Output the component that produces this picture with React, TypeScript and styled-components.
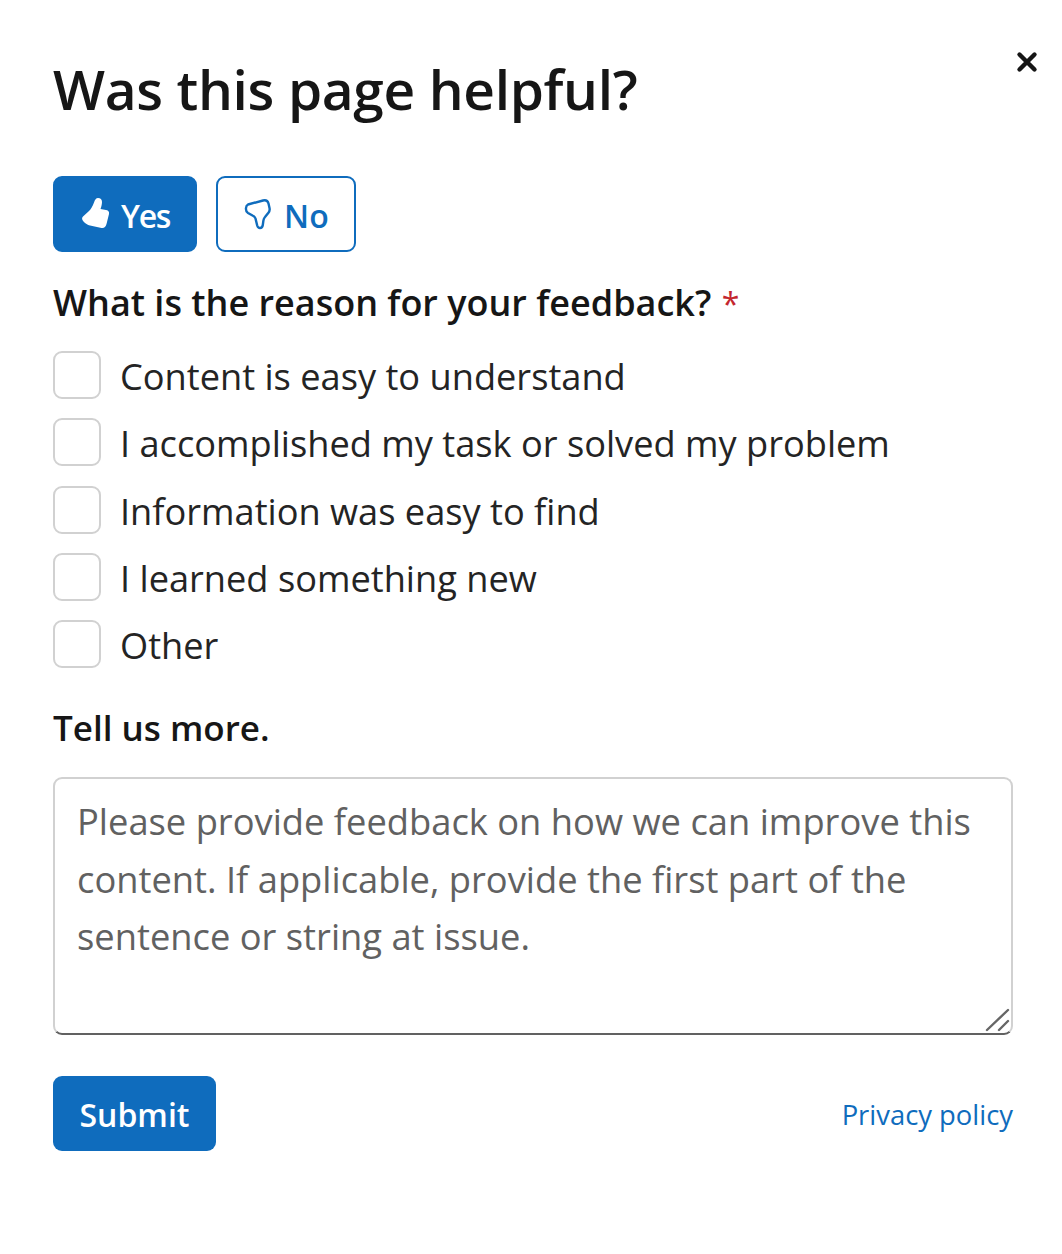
import styled, { createGlobalStyle } from "styled-components";

const reasons = [
  "Content is easy to understand",
  "I accomplished my task or solved my problem",
  "Information was easy to find",
  "I learned something new",
  "Other",
];

export default function App() {
  return (
    <>
      <GlobalStyle />
      <Dialog>
        <CloseButton aria-label="Close">
          <svg width="22" height="22" viewBox="0 0 22 22">
            <path d="M3.500 3.500L18.500 18.500M18.500 3.500L3.500 18.500" stroke="#161616" strokeWidth="4.400" strokeLinecap="round" />
          </svg>
        </CloseButton>
        <Title>Was this page helpful?</Title>
        <VoteRow>
          <VoteButton $selected>
            <svg width="28" height="34" viewBox="0 0 28 34">
              <path
                d="M17 1c2.500 0 4 1.500 4 4 0 2.500-.8 5-1.500 7L25 13c2.500.6 3.500 2 3 4l-2.500 10c-.8 3-2.500 4.500-5 4L9 28.500c-2.500-.6-4.500-2-6.500-4C.8 22.800.6 20.800 2 19.500L8 14c2-1.800 3.500-4.500 5-8.500C14 2.500 15 1 17 1z"
                fill="#fff"
              />
            </svg>
            <VoteText $tight>Yes</VoteText>
          </VoteButton>
          <VoteButton>
            <svg width="28" height="34" viewBox="0 0 28 34">
              <path
                d="M4 7.500L19 3.500c3-.7 4.800.5 5.500 3L25.500 11c.5 2.200 0 3.800-1.500 5.300L21 20c-1 1-1.400 2.200-1.600 3.700L18.800 28c-.3 2-1.300 3-2.800 3-1.400 0-2.300-.8-2.800-2.500L11.500 21.500c-.5-1.600-1.500-2.300-3-3L4 16C2 14.800 1.800 13 2 11c.1-1.600.7-2.900 2-3.500z"
                fill="none"
                stroke="#0f6cbd"
                strokeWidth="2.400"
                strokeLinejoin="round"
              />
            </svg>
            <VoteText>No</VoteText>
          </VoteButton>
        </VoteRow>
        <Label>
          What is the reason for your feedback? <Required>*</Required>
        </Label>
        <ReasonList>
          {reasons.map((reason) => (
            <ReasonRow key={reason}>
              <Checkbox type="checkbox" />
              <ReasonText>{reason}</ReasonText>
            </ReasonRow>
          ))}
        </ReasonList>
        <MoreLabel>Tell us more.</MoreLabel>
        <TextareaWrap>
          <Textarea placeholder="Please provide feedback on how we can improve this content. If applicable, provide the first part of the sentence or string at issue." />
          <ResizeHandle width="26" height="24" viewBox="0 0 26 24">
            <path d="M2 22L23 2M14 22L23 13" stroke="#666" strokeWidth="2.400" strokeLinecap="round" />
          </ResizeHandle>
        </TextareaWrap>
        <Footer>
          <SubmitButton>Submit</SubmitButton>
          <PrivacyLink href="#">Privacy policy</PrivacyLink>
        </Footer>
      </Dialog>
    </>
  );
}

const GlobalStyle = createGlobalStyle`
  * {
    box-sizing: border-box;
  }
  body {
    margin: 0;
    background: #fff;
    color: #161616;
    font-family: "Open Sans", "Noto Sans", sans-serif;
  }
`;

const Dialog = styled.div`
  position: relative;
  width: 1062px;
  height: 1254px;
  padding: 54px 49px 0 53px;
`;

const CloseButton = styled.button`
  position: absolute;
  top: 51px;
  right: 24px;
  display: flex;
  padding: 0;
  border: none;
  background: none;
`;

const Title = styled.h1`
  margin: 0 0 53px;
  font-size: 55px;
  line-height: 69px;
  font-weight: 600;
  letter-spacing: -0.35px;
`;

const VoteRow = styled.div`
  display: flex;
  gap: 19px;
  margin-bottom: 26px;
`;

const VoteButton = styled.button<{ $selected?: boolean }>`
  display: flex;
  align-items: center;
  justify-content: center;
  gap: 12px;
  height: 76px;
  padding: 0 25px 0 26px;
  border: 2px solid #0f6cbd;
  border-radius: 9px;
  background: ${(p) => (p.$selected ? "#0f6cbd" : "#fff")};
  color: ${(p) => (p.$selected ? "#fff" : "#0f6cbd")};
  font-family: inherit;
  font-size: 32px;
  font-weight: 600;
`;

const VoteText = styled.span<{ $tight?: boolean }>`
  padding-top: 2px;
  letter-spacing: ${(p) => (p.$tight ? "-1.3px" : "0")};
`;

const Label = styled.div`
  margin-bottom: 23px;
  font-size: 36px;
  line-height: 50px;
  font-weight: 600;
`;

const Required = styled.span`
  margin-left: 1px;
  color: #c4262e;
  font-weight: 400;
  font-size: 32px;
  line-height: 0;
`;

const ReasonList = styled.div`
  display: flex;
  flex-direction: column;
  gap: 19.25px;
  margin-bottom: 35px;
`;

const ReasonRow = styled.label`
  display: flex;
  align-items: center;
  gap: 19px;
  height: 48px;
  font-size: 36.2px;
  color: #242424;
`;

const ReasonText = styled.span`
  padding-top: 2px;
`;

const Checkbox = styled.input`
  appearance: none;
  flex: none;
  width: 48px;
  height: 48px;
  margin: 0;
  border: 2px solid #d1d1d1;
  border-radius: 9px;
  background: #fff;
`;

const MoreLabel = styled(Label)`
  margin-bottom: 24px;
  font-size: 35px;
`;

const TextareaWrap = styled.div`
  position: relative;
  height: 258px;
  margin-bottom: 41px;
`;

const Textarea = styled.textarea`
  display: block;
  width: 100%;
  height: 100%;
  padding: 14px 22px;
  border: 2px solid #d1d1d1;
  border-bottom-color: #616161;
  border-radius: 9px;
  outline: none;
  resize: none;
  font-family: inherit;
  font-size: 36.3px;
  line-height: 57.5px;
  &::placeholder {
    color: #616161;
    opacity: 1;
  }
`;

const ResizeHandle = styled.svg`
  position: absolute;
  right: 2px;
  bottom: 3px;
`;

const Footer = styled.div`
  display: flex;
  align-items: center;
  justify-content: space-between;
`;

const SubmitButton = styled.button`
  height: 75px;
  width: 163px;
  padding: 2px 0 0;
  border: none;
  border-radius: 9px;
  background: #0f6cbd;
  color: #fff;
  font-family: inherit;
  font-size: 32px;
  font-weight: 600;
`;

const PrivacyLink = styled.a`
  padding-top: 1px;
  color: #0f6cbd;
  font-size: 27.4px;
  text-decoration: none;
`;
